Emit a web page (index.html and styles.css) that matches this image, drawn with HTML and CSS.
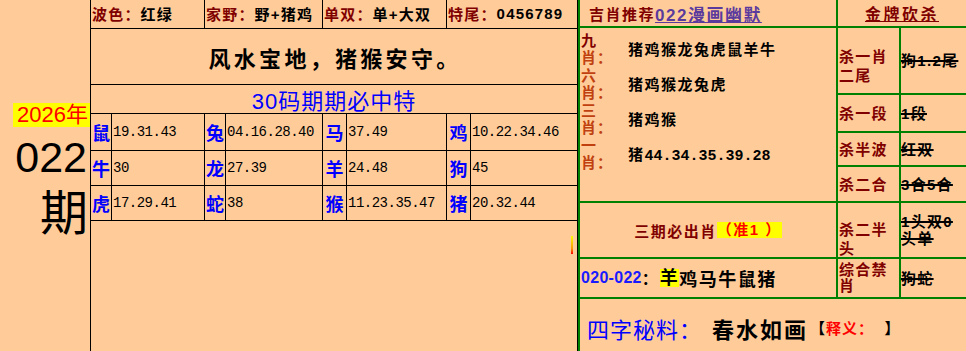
FILE: index.html
```html
<!DOCTYPE html>
<html lang="zh">
<head>
<meta charset="utf-8">
<title>022期</title>
<link rel="stylesheet" href="styles.css">
</head>
<body>
<div class="page">
  <aside class="issue">
    <div class="year">2026年</div>
    <div class="num">022</div>
    <div class="qi">期</div>
  </aside>

  <main class="mid">
    <div class="info">
      <div class="info-cell"><span class="lbl">波色：</span>红绿</div>
      <div class="info-cell"><span class="lbl">家野：</span>野+猪鸡</div>
      <div class="info-cell"><span class="lbl">单双：</span>单+大双</div>
      <div class="info-cell"><span class="lbl">特尾：</span>0456789</div>
    </div>
    <div class="motto">风水宝地，猪猴安守。</div>
    <div class="headline">30码期期必中特</div>
    <div class="codes">
      <div class="an">鼠</div><div class="nums">19.31.43</div>
      <div class="an">兔</div><div class="nums">04.16.28.40</div>
      <div class="an">马</div><div class="nums">37.49</div>
      <div class="an">鸡</div><div class="nums">10.22.34.46</div>
      <div class="an">牛</div><div class="nums">30</div>
      <div class="an">龙</div><div class="nums">27.39</div>
      <div class="an">羊</div><div class="nums">24.48</div>
      <div class="an">狗</div><div class="nums">45</div>
      <div class="an">虎</div><div class="nums">17.29.41</div>
      <div class="an">蛇</div><div class="nums">38</div>
      <div class="an">猴</div><div class="nums">11.23.35.47</div>
      <div class="an">猪</div><div class="nums">20.32.44</div>
    </div>
    <div class="lower"><span class="mark"></span></div>
  </main>

  <section class="side">
    <div class="rec-title">吉肖推荐<span class="rec-link">022漫画幽默</span></div>
    <div class="kill-title"><span class="kill-text">金牌砍杀</span></div>
    <div class="picks">
      <div class="pick"><div class="pick-lbl"><span class="first">九</span>肖：</div><div class="pick-val">猪鸡猴龙兔虎鼠羊牛</div></div>
      <div class="pick"><div class="pick-lbl">六肖：</div><div class="pick-val">猪鸡猴龙兔虎</div></div>
      <div class="pick"><div class="pick-lbl">三肖：</div><div class="pick-val">猪鸡猴</div></div>
      <div class="pick"><div class="pick-lbl">一肖：</div><div class="pick-val">猪<span class="mono">44.34.35.39.28</span></div></div>
    </div>
    <div class="k-lbl low">杀一肖二尾</div><div class="k-val"><span class="strike">狗1.2尾</span></div>
    <div class="k-lbl">杀一段</div><div class="k-val"><span class="strike">1段</span></div>
    <div class="k-lbl">杀半波</div><div class="k-val"><span class="strike">红双</span></div>
    <div class="k-lbl">杀二合</div><div class="k-val"><span class="strike">3合5合</span></div>
    <div class="must">三期必出肖<span class="hl-red">（准1 ）</span></div>
    <div class="k-lbl low2">杀二半头</div><div class="k-val"><span class="strike">1头双0头单</span></div>
    <div class="range"><span class="range-key">020-022</span><span class="range-colon">：</span><span class="hl">羊</span>鸡马牛鼠猪</div>
    <div class="k-lbl tight">综合禁肖</div><div class="k-val"><span class="strike">狗蛇</span></div>
    <div class="secret">四字秘料：<b class="secret-word">春水如画</b><span class="note">【<em class="note-key">释义：</em>&nbsp;&nbsp;】</span></div>
  </section>
</div>
</body>
</html>
```

FILE: styles.css
```css
* {
  box-sizing: border-box;
  margin: 0;
  padding: 0;
}

body {
  background: #FFCC99;
  font-family: "Liberation Sans", "Noto Sans CJK SC", sans-serif;
  color: #000;
}

.page {
  display: flex;
  width: 966px;
  height: 351px;
  overflow: hidden;
}

/* ---------- left issue column ---------- */
.issue {
  width: 90px;
  flex: none;
  display: flex;
  flex-direction: column;
  align-items: flex-end;
  padding-top: 103px;
}

.year {
  font-size: 22px;
  line-height: 24px;
  color: #ff0000;
  background: #ffff00;
  padding: 0 2px 0 4px;
}

.num {
  font-size: 43px;
  line-height: 50px;
  margin-top: 5px;
  padding-right: 3px;
}

.qi {
  font-family: "Noto Sans CJK SC", sans-serif;
  font-size: 48px;
  line-height: 48px;
  margin-top: 3px;
  padding-right: 2px;
}

/* ---------- middle panel ---------- */
.mid {
  width: 488px;
  flex: none;
  border-left: 1px solid #000;
  border-right: 1px solid #000;
  display: flex;
  flex-direction: column;
}

.info {
  display: grid;
  grid-template-columns: 114px 118px 124px 1fr;
  height: 29px;
  border-bottom: 1px solid #000;
}

.info-cell {
  border-right: 1px solid #000;
  display: flex;
  align-items: center;
  padding: 0 0 2px 1px;
  font-size: 15px;
  font-weight: bold;
  letter-spacing: 1.2px;
  white-space: nowrap;
}

.info-cell:last-child {
  border-right: 0;
}

.lbl {
  color: #800000;
}

.motto {
  height: 56px;
  border-bottom: 1px solid #000;
  display: flex;
  align-items: center;
  justify-content: center;
  padding-left: 2px;
  font-size: 22px;
  font-weight: bold;
  letter-spacing: 3.3px;
}

.headline {
  height: 29px;
  border-bottom: 1px solid #000;
  display: flex;
  align-items: center;
  justify-content: center;
  font-size: 22px;
  letter-spacing: 1px;
  color: #0000ff;
}

.codes {
  display: grid;
  grid-template-columns: 21px 93px 21px 97px 24px 100px 24px 106px;
  grid-template-rows: 37px 35px 35px;
}

.codes > div {
  border-right: 1px solid #000;
  border-bottom: 1px solid #000;
  display: flex;
  align-items: center;
}

.codes > div:nth-child(8n) {
  border-right: 0;
}

.an {
  justify-content: center;
  font-family: "Noto Sans CJK SC", sans-serif;
  font-size: 18px;
  font-weight: bold;
  color: #0000ff;
}

.nums {
  font-family: "Liberation Mono", monospace;
  font-size: 14px;
  letter-spacing: -0.5px;
  padding-left: 1px;
}

.lower {
  flex: 1;
  display: flex;
  justify-content: flex-end;
  align-items: flex-start;
  padding: 15px 4px 0 0;
}

.mark {
  width: 2px;
  height: 18px;
  background: linear-gradient(#ffff00, #ff9900 70%, #ff0000);
}

/* ---------- right panel ---------- */
.side {
  flex: 1;
  display: grid;
  grid-template-columns: 256px 61px 65px;
  grid-template-rows: 26px 65px 36px 32px 34px 54px 38px 52px;
  gap: 2px;
  padding-left: 2px;
  background: #008000;
}

.side > * {
  background: #FFCC99;
}

.rec-title {
  display: flex;
  align-items: center;
  padding-left: 9px;
  font-size: 15px;
  font-weight: bold;
  letter-spacing: 1.5px;
  color: #800000;
  white-space: nowrap;
}

.rec-link {
  font-size: 17px;
  color: #5b3a9e;
  text-decoration: underline;
}

.kill-title {
  grid-column: span 2;
  display: flex;
  align-items: center;
  justify-content: center;
  font-size: 16px;
  font-weight: bold;
  color: #800000;
}

.kill-text {
  letter-spacing: 2.5px;
  text-decoration: underline;
}

.picks {
  grid-column: 1;
  grid-row: 2 / 6;
  padding-top: 3px;
  display: flex;
  flex-direction: column;
}

.pick {
  height: 35px;
  display: flex;
  align-items: center;
}

.pick-lbl {
  width: 36px;
  flex: none;
  padding-left: 1px;
  font-size: 15px;
  line-height: 17px;
  letter-spacing: 1px;
  font-weight: bold;
  color: #c0400f;
}

.first {
  color: #800000;
}

.pick-val {
  padding-left: 12px;
  font-size: 15px;
  font-weight: bold;
  letter-spacing: 1.5px;
  white-space: nowrap;
}

.mono {
  font-family: "Liberation Mono", monospace;
  letter-spacing: 0;
}

.k-lbl {
  display: flex;
  align-items: center;
  padding-left: 1px;
  font-size: 15px;
  line-height: 19px;
  letter-spacing: 1.3px;
  font-weight: bold;
  color: #800000;
}

.k-lbl.low {
  align-items: flex-start;
  padding-top: 19px;
}

.k-lbl.low2 {
  align-items: flex-start;
  padding-top: 17px;
}

.k-lbl.tight {
  line-height: 16px;
}

.k-val {
  display: flex;
  align-items: center;
  font-size: 15px;
  line-height: 17px;
  font-weight: bold;
  letter-spacing: 1.3px;
}

.strike {
  text-decoration: line-through;
  text-decoration-thickness: 2px;
}

.must {
  display: flex;
  align-items: center;
  justify-content: center;
  font-size: 15px;
  font-weight: bold;
  letter-spacing: 1.5px;
  color: #800000;
  white-space: nowrap;
}

.hl-red {
  display: inline-block;
  line-height: 16px;
  color: #ff0000;
  background: #ffff00;
}

.range {
  display: flex;
  align-items: center;
  padding-left: 1px;
  font-size: 18px;
  letter-spacing: 1.5px;
  font-weight: bold;
  white-space: nowrap;
}

.range-key {
  color: #1a1aff;
  font-size: 16px;
  letter-spacing: 0.3px;
}

.range-colon {
  font-size: 16px;
  letter-spacing: 0;
  margin-right: 2px;
}

.hl {
  display: inline-block;
  line-height: 18px;
  background: #ffff00;
}

.secret {
  grid-column: 1 / -1;
  display: flex;
  align-items: center;
  padding: 5px 0 0 7px;
  color: #0000ff;
  font-size: 22px;
  letter-spacing: 1px;
  white-space: nowrap;
}

.secret-word {
  color: #000;
  letter-spacing: 2px;
  margin-left: 10px;
}

.note {
  color: #000;
  font-size: 15px;
  font-weight: bold;
  letter-spacing: 1px;
  margin-left: 2px;
}

.note-key {
  font-style: normal;
  color: #ff0000;
}
```
